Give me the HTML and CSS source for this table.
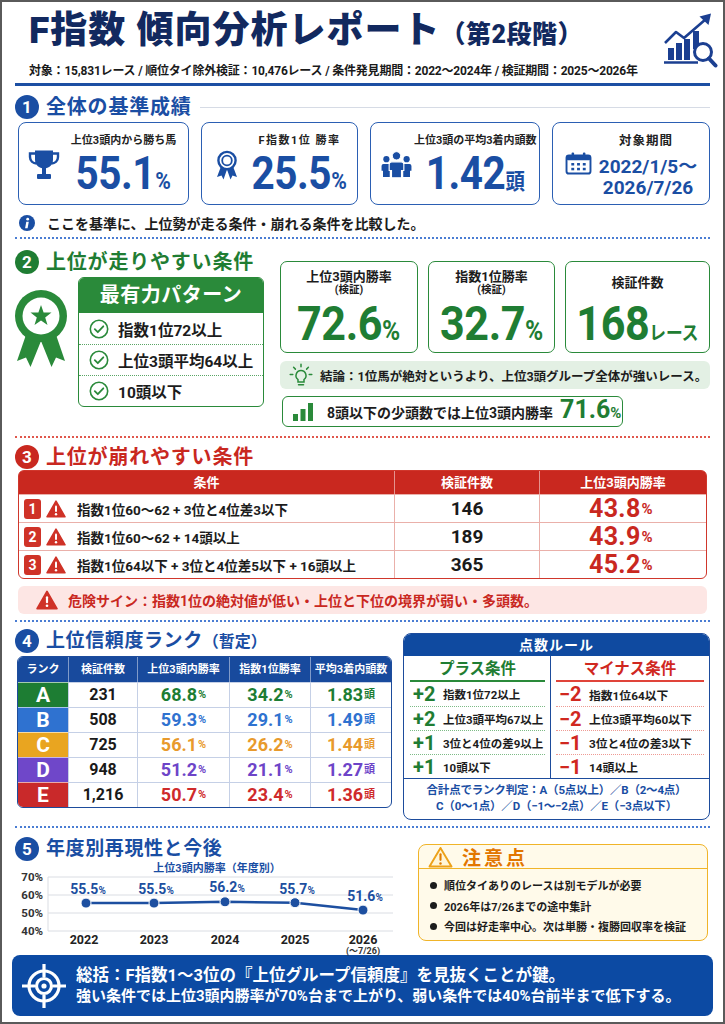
FILE: index.html
```html
<!DOCTYPE html>
<html lang="ja">
<head>
<meta charset="utf-8">
<title>F指数 傾向分析レポート</title>
<link rel="stylesheet" href="styles.css">
</head>
<body>
<div class="page">

<header class="hdr">
  <div class="hdr-text">
    <h1 class="title">F指数 傾向分析レポート<span class="title-sub">（第2段階）</span></h1>
    <p class="meta">対象：15,831レース / 順位タイ除外検証：10,476レース / 条件発見期間：2022～2024年 / 検証期間：2025～2026年</p>
  </div>
  <svg class="logo" viewBox="0 0 56 57" aria-hidden="true">
    <g fill="#1b3f91">
      <rect x="6" y="36" width="6" height="12"/>
      <rect x="14" y="31" width="6" height="17"/>
      <rect x="22" y="27" width="6" height="21"/>
      <rect x="31" y="19" width="6" height="18"/>
    </g>
    <line x1="2" y1="50.5" x2="36" y2="50.5" stroke="#1b3f91" stroke-width="2.5"/>
    <polyline points="3,31 14,20 22,26 44,7" fill="none" stroke="#1b3f91" stroke-width="2.6" stroke-linejoin="round"/>
    <polygon points="37.5,4.5 49,1.5 46.5,13" fill="#1b3f91"/>
    <circle cx="41" cy="40" r="8.5" fill="#fff" stroke="#1b3f91" stroke-width="3"/>
    <line x1="47" y1="46.5" x2="53.5" y2="53.5" stroke="#1b3f91" stroke-width="4" stroke-linecap="round"/>
  </svg>
</header>

<section class="s1">
  <div class="sec-head c-blue"><span class="num">1</span><h2>全体の基準成績</h2><span class="head-line"></span></div>
  <div class="kpis">
    <div class="kpi">
      <div class="kpi-label">上位3頭内から勝ち馬</div>
      <svg class="kpi-ico ico-trophy" viewBox="0 0 34 32" fill="#1a4ea3">
        <path d="M8 1.5h18v9c0 5.5-4 9-9 9s-9-3.5-9-9z"/>
        <path d="M8.5 4.5H3v3.5c0 4 3 6.5 6.5 6.5M25.5 4.5H31v3.5c0 4-3 6.5-6.5 6.5" fill="none" stroke="#1a4ea3" stroke-width="2.4"/>
        <rect x="15" y="19" width="4" height="6"/>
        <rect x="10" y="25" width="14" height="5" rx="1"/>
      </svg>
      <div class="kpi-val"><span class="big">55.1<small>%</small></span></div>
    </div>
    <div class="kpi">
      <div class="kpi-label spaced">F指数1位 勝率</div>
      <svg class="kpi-ico ico-rosette" viewBox="0 0 24 30" fill="#1a4ea3">
        <path d="M6.5 15 L2 27 L6.5 25.5 L8.5 29.5 L12 19.5 Z"/>
        <path d="M17.5 15 L22 27 L17.5 25.5 L15.5 29.5 L12 19.5 Z"/>
        <circle cx="12" cy="10.5" r="8.6" fill="#fff" stroke="#1a4ea3" stroke-width="2.4"/>
        <circle cx="12" cy="10.5" r="4.8" fill="none" stroke="#1a4ea3" stroke-width="1.8"/>
      </svg>
      <div class="kpi-val"><span class="big">25.5<small>%</small></span></div>
    </div>
    <div class="kpi">
      <div class="kpi-label">上位3頭の平均3着内頭数</div>
      <svg class="kpi-ico ico-people" viewBox="0 0 32 28" fill="#1a4ea3">
        <circle cx="5.5" cy="8.5" r="3.2"/>
        <path d="M2.5 13.5h6a2 2 0 0 1 2 2v5h-1.5v6.5h-7v-6.5H0.5v-5a2 2 0 0 1 2-2z"/>
        <circle cx="26.5" cy="8.5" r="3.2"/>
        <path d="M23.5 13.5h6a2 2 0 0 1 2 2v5h-1.5v6.5h-7v-6.5h-1.5v-5a2 2 0 0 1 2-2z"/>
        <circle cx="16" cy="5" r="4.3" stroke="#fff" stroke-width="1"/>
        <path d="M11 11.2h10a2.6 2.6 0 0 1 2.6 2.6v6.4h-2.4v7.6h-10.4v-7.6H8.4v-6.4a2.6 2.6 0 0 1 2.6-2.6z" stroke="#fff" stroke-width="1.2"/>
      </svg>
      <div class="kpi-val"><span class="big">1.42<small class="jp">頭</small></span></div>
    </div>
    <div class="kpi">
      <div class="kpi-label k4">対象期間</div>
      <svg class="kpi-ico ico-cal" viewBox="0 0 28 24">
        <rect x="1.5" y="3.5" width="25" height="19" rx="2.5" fill="none" stroke="#1a4ea3" stroke-width="2"/>
        <rect x="1.5" y="3.5" width="25" height="5" rx="1.5" fill="#1a4ea3"/>
        <rect x="6.8" y="0.5" width="2.6" height="6" rx="1" fill="#1a4ea3"/>
        <rect x="18.6" y="0.5" width="2.6" height="6" rx="1" fill="#1a4ea3"/>
        <g fill="#1a4ea3">
          <rect x="6.5" y="11.5" width="3" height="2.6"/>
          <rect x="12.5" y="11.5" width="3" height="2.6"/>
          <rect x="18.5" y="11.5" width="3" height="2.6"/>
          <rect x="6.5" y="16.5" width="3" height="2.6"/>
          <rect x="12.5" y="16.5" width="3" height="2.6"/>
          <rect x="18.5" y="16.5" width="3" height="2.6"/>
        </g>
      </svg>
      <div class="kpi-date">2022/1/5～<br>2026/7/26</div>
    </div>
  </div>
  <p class="info">
    <svg viewBox="0 0 16 16"><circle cx="8" cy="8" r="8" fill="#1a4ea3"/><circle cx="8.7" cy="4.2" r="1.4" fill="#fff"/><path d="M7.3 6.7h2.5l-1.2 6.6H6.1z" fill="#fff"/></svg>
    ここを基準に、上位勢が走る条件・崩れる条件を比較した。
  </p>
</section>

<div class="sep sep-blue"></div>

<section class="s2">
  <div class="s2-left">
    <div class="sec-head c-green"><span class="num">2</span><h2>上位が走りやすい条件</h2></div>
    <div class="pattern-wrap">
      <svg class="award" viewBox="0 0 54 82">
        <path d="M14 40 L3 72 L12 68.5 L16.5 78 L27 52 Z" fill="#2a8a3a"/>
        <path d="M40 40 L51 72 L42 68.5 L37.5 78 L27 52 Z" fill="#2a8a3a"/>
        <circle cx="27" cy="27" r="26" fill="#2a8a3a"/>
        <circle cx="27" cy="27" r="18.5" fill="#fff"/>
        <polygon points="27,16 29.6,23.4 37.5,23.6 31.2,28.4 33.5,36 27,31.5 20.5,36 22.8,28.4 16.5,23.6 24.4,23.4" fill="#2a8a3a"/>
      </svg>
      <div class="pattern">
        <div class="pattern-head">最有力パターン</div>
        <ul class="pattern-list">
          <li><svg class="chk" viewBox="0 0 20 20"><circle cx="10" cy="10" r="8.7" fill="none" stroke="#2a8a3a" stroke-width="1.6"/><polyline points="5.8,10.2 8.8,13.2 14.3,7.3" fill="none" stroke="#2a8a3a" stroke-width="1.8" stroke-linecap="round" stroke-linejoin="round"/></svg>指数1位72以上</li>
          <li><svg class="chk" viewBox="0 0 20 20"><circle cx="10" cy="10" r="8.7" fill="none" stroke="#2a8a3a" stroke-width="1.6"/><polyline points="5.8,10.2 8.8,13.2 14.3,7.3" fill="none" stroke="#2a8a3a" stroke-width="1.8" stroke-linecap="round" stroke-linejoin="round"/></svg>上位3頭平均64以上</li>
          <li><svg class="chk" viewBox="0 0 20 20"><circle cx="10" cy="10" r="8.7" fill="none" stroke="#2a8a3a" stroke-width="1.6"/><polyline points="5.8,10.2 8.8,13.2 14.3,7.3" fill="none" stroke="#2a8a3a" stroke-width="1.8" stroke-linecap="round" stroke-linejoin="round"/></svg>10頭以下</li>
        </ul>
      </div>
    </div>
  </div>
  <div class="s2-right">
    <div class="stats">
      <div class="stat">
        <div class="stat-top"><div class="stat-label">上位3頭内勝率</div><div class="stat-sub">(検証)</div></div>
        <div class="stat-val"><span class="big">72.6<small>%</small></span></div>
      </div>
      <div class="stat">
        <div class="stat-top"><div class="stat-label">指数1位勝率</div><div class="stat-sub">(検証)</div></div>
        <div class="stat-val"><span class="big">32.7<small>%</small></span></div>
      </div>
      <div class="stat">
        <div class="stat-top"><div class="stat-label">検証件数</div></div>
        <div class="stat-val"><span class="big">168<small class="unit">レース</small></span></div>
      </div>
    </div>
    <div class="conclusion">
      <svg viewBox="0 0 24 24" fill="none" stroke="#2a8a3a" stroke-width="1.5" stroke-linecap="round"><path d="M12 7.5a5 5 0 0 0-3 9v2.5h6v-2.5a5 5 0 0 0-3-9z"/><path d="M9.5 21.7h5"/><path d="M12 1.2v2.6M4.6 4.3l1.8 1.8M19.4 4.3l-1.8 1.8M1.2 11.5h2.6M20.2 11.5h2.6"/></svg>
      結論：1位馬が絶対というより、上位3頭グループ全体が強いレース。
    </div>
    <div class="mini">
      <svg viewBox="0 0 20 18" fill="#2a8a3a"><rect x="0" y="11" width="5" height="7"/><rect x="7.5" y="6" width="5" height="12"/><rect x="15" y="0" width="5" height="18"/></svg>
      <span class="mini-text">8頭以下の少頭数では上位3頭内勝率</span><span class="mini-val">71.6<small>%</small></span>
    </div>
  </div>
</section>

<div class="sep sep-red"></div>

<section class="s3">
  <div class="sec-head c-red"><span class="num">3</span><h2>上位が崩れやすい条件</h2></div>
  <div class="risk">
    <div class="risk-row risk-head"><div>条件</div><div>検証件数</div><div>上位3頭内勝率</div></div>
    <div class="risk-row risk-body">
      <div class="risk-cond"><span class="badge">1</span><svg class="warn" viewBox="0 0 20 18"><path d="M10 1.2 L19 16.8 H1 Z" fill="#cf3227" stroke="#cf3227" stroke-width="1.6" stroke-linejoin="round"/><rect x="9" y="5.6" width="2" height="6.4" rx="1" fill="#fff"/><circle cx="10" cy="14.2" r="1.2" fill="#fff"/></svg>指数1位60～62 + 3位と4位差3以下</div>
      <div class="risk-n">146</div>
      <div class="risk-v">43.8<small>%</small></div>
    </div>
    <div class="risk-row risk-body">
      <div class="risk-cond"><span class="badge">2</span><svg class="warn" viewBox="0 0 20 18"><path d="M10 1.2 L19 16.8 H1 Z" fill="#cf3227" stroke="#cf3227" stroke-width="1.6" stroke-linejoin="round"/><rect x="9" y="5.6" width="2" height="6.4" rx="1" fill="#fff"/><circle cx="10" cy="14.2" r="1.2" fill="#fff"/></svg>指数1位60～62 + 14頭以上</div>
      <div class="risk-n">189</div>
      <div class="risk-v">43.9<small>%</small></div>
    </div>
    <div class="risk-row risk-body risk-last">
      <div class="risk-cond"><span class="badge">3</span><svg class="warn" viewBox="0 0 20 18"><path d="M10 1.2 L19 16.8 H1 Z" fill="#cf3227" stroke="#cf3227" stroke-width="1.6" stroke-linejoin="round"/><rect x="9" y="5.6" width="2" height="6.4" rx="1" fill="#fff"/><circle cx="10" cy="14.2" r="1.2" fill="#fff"/></svg>指数1位64以下 + 3位と4位差5以下 + 16頭以上</div>
      <div class="risk-n">365</div>
      <div class="risk-v">45.2<small>%</small></div>
    </div>
  </div>
  <div class="danger">
    <svg viewBox="0 0 20 18"><path d="M10 1.2 L19 16.8 H1 Z" fill="#cf3227" stroke="#cf3227" stroke-width="1.6" stroke-linejoin="round"/><rect x="9" y="5.6" width="2" height="6.4" rx="1" fill="#fff"/><circle cx="10" cy="14.2" r="1.2" fill="#fff"/></svg>
    危険サイン：指数1位の絶対値が低い・上位と下位の境界が弱い・多頭数。
  </div>
</section>

<div class="sep sep-blue sep-b2"></div>

<section class="s4">
  <div class="s4-left">
    <div class="sec-head c-blue small-h"><span class="num">4</span><h2>上位信頼度ランク<span class="h2-sub">（暫定）</span></h2></div>
    <div class="rank">
      <div class="rk-row rk-head"><div>ランク</div><div>検証件数</div><div>上位3頭内勝率</div><div>指数1位勝率</div><div>平均3着内頭数</div></div>
      <div class="rk-row rk-body ra"><div class="rk-letter">A</div><div class="rk-n">231</div><div class="rk-v">68.8<small>%</small></div><div class="rk-v">34.2<small>%</small></div><div class="rk-v">1.83<small>頭</small></div></div>
      <div class="rk-row rk-body rb"><div class="rk-letter">B</div><div class="rk-n">508</div><div class="rk-v">59.3<small>%</small></div><div class="rk-v">29.1<small>%</small></div><div class="rk-v">1.49<small>頭</small></div></div>
      <div class="rk-row rk-body rc"><div class="rk-letter">C</div><div class="rk-n">725</div><div class="rk-v">56.1<small>%</small></div><div class="rk-v">26.2<small>%</small></div><div class="rk-v">1.44<small>頭</small></div></div>
      <div class="rk-row rk-body rd"><div class="rk-letter">D</div><div class="rk-n">948</div><div class="rk-v">51.2<small>%</small></div><div class="rk-v">21.1<small>%</small></div><div class="rk-v">1.27<small>頭</small></div></div>
      <div class="rk-row rk-body re"><div class="rk-letter">E</div><div class="rk-n">1,216</div><div class="rk-v">50.7<small>%</small></div><div class="rk-v">23.4<small>%</small></div><div class="rk-v">1.36<small>頭</small></div></div>
    </div>
  </div>
  <div class="pts">
    <div class="pts-head">点数ルール</div>
    <div class="pts-cols">
      <div class="pts-col plus">
        <div class="pts-sub">プラス条件</div>
        <div class="pts-row"><span class="sign">+2</span>指数1位72以上</div>
        <div class="pts-row"><span class="sign">+2</span>上位3頭平均67以上</div>
        <div class="pts-row"><span class="sign">+1</span>3位と4位の差9以上</div>
        <div class="pts-row"><span class="sign">+1</span>10頭以下</div>
      </div>
      <div class="pts-col minus">
        <div class="pts-sub">マイナス条件</div>
        <div class="pts-row"><span class="sign">−2</span>指数1位64以下</div>
        <div class="pts-row"><span class="sign">−2</span>上位3頭平均60以下</div>
        <div class="pts-row"><span class="sign">−1</span>3位と4位の差3以下</div>
        <div class="pts-row"><span class="sign">−1</span>14頭以上</div>
      </div>
    </div>
    <div class="pts-foot">合計点でランク判定：A（5点以上）／B（2～4点）<br>C（0～1点）／D（−1～−2点）／E（−3点以下）</div>
  </div>
</section>

<div class="sep sep-blue sep-b3"></div>

<section class="s5">
  <div class="s5-left">
    <div class="sec-head c-blue small-h"><span class="num">5</span><h2>年度別再現性と今後</h2></div>
    <svg class="chart" viewBox="0 0 385 93">
      <text class="ch-title" x="202" y="10" text-anchor="middle">上位3頭内勝率（年度別）</text>
      <g stroke="#dadde3" stroke-width="1">
        <line x1="33" y1="15" x2="378" y2="15"/>
        <line x1="33" y1="33" x2="378" y2="33"/>
        <line x1="33" y1="51" x2="378" y2="51"/>
        <line x1="33" y1="69" x2="378" y2="69"/>
        <line x1="33" y1="15" x2="33" y2="69"/>
      </g>
      <g class="ch-y" text-anchor="end">
        <text x="28" y="19">70%</text>
        <text x="28" y="37">60%</text>
        <text x="28" y="55">50%</text>
        <text x="28" y="73">40%</text>
      </g>
      <polyline points="71,41.1 139,41.1 210,39.8 280,40.7 348,48.1" fill="none" stroke="#1d4fa0" stroke-width="2.5" stroke-linejoin="round"/>
      <g fill="#1d4fa0" stroke="#fff" stroke-width="1">
        <circle cx="71" cy="41.1" r="5"/>
        <circle cx="139" cy="41.1" r="5"/>
        <circle cx="210" cy="39.8" r="5"/>
        <circle cx="280" cy="40.7" r="5"/>
        <circle cx="348" cy="48.1" r="5"/>
      </g>
      <g class="ch-v" text-anchor="middle">
        <text x="73" y="32">55.5<tspan class="ch-p">%</tspan></text>
        <text x="141" y="32">55.5<tspan class="ch-p">%</tspan></text>
        <text x="212" y="30">56.2<tspan class="ch-p">%</tspan></text>
        <text x="282" y="32">55.7<tspan class="ch-p">%</tspan></text>
        <text x="350" y="39">51.6<tspan class="ch-p">%</tspan></text>
      </g>
      <g class="ch-x" text-anchor="middle">
        <text x="69" y="82">2022</text>
        <text x="139" y="82">2023</text>
        <text x="210" y="82">2024</text>
        <text x="280" y="82">2025</text>
        <text x="348" y="82">2026</text>
      </g>
      <text class="ch-xs" x="348" y="92" text-anchor="middle">(～7/26)</text>
    </svg>
  </div>
  <div class="caution">
    <div class="caution-head">
      <svg viewBox="0 0 26 23"><path d="M13 2 L24.5 21.5 H1.5 Z" fill="#fff6d8" stroke="#eda21a" stroke-width="2" stroke-linejoin="round"/><rect x="11.9" y="7.6" width="2.2" height="8" rx="1.1" fill="#e07b00"/><circle cx="13" cy="18.4" r="1.3" fill="#e07b00"/></svg>
      注意点
    </div>
    <ul>
      <li>順位タイありのレースは別モデルが必要</li>
      <li>2026年は7/26までの途中集計</li>
      <li>今回は好走率中心。次は単勝・複勝回収率を検証</li>
    </ul>
  </div>
</section>

<div class="summary">
  <svg viewBox="0 0 44 48" fill="none" stroke="#fff" stroke-width="3.2"><circle cx="22" cy="24" r="15"/><circle cx="22" cy="24" r="7.5"/><circle cx="22" cy="24" r="2.6" fill="#fff" stroke="none"/><path d="M22 2v13M22 33v13M0 24h13M31 24h13"/></svg>
  <div class="sum-text">
    <p class="sum-1">総括：F指数1～3位の『上位グループ信頼度』を見抜くことが鍵。</p>
    <p class="sum-2">強い条件では上位3頭内勝率が70%台まで上がり、弱い条件では40%台前半まで低下する。</p>
  </div>
</div>

</div>
</body>
</html>
```

FILE: styles.css
```css
* { box-sizing: border-box; margin: 0; padding: 0; }
html, body { background: #fff; }
body {
  font-family: Roboto, "Noto Sans CJK JP", sans-serif;
  font-weight: 700;
  color: #1c1c1c;
}
ul { list-style: none; }
svg { display: block; flex: none; }

.page {
  width: 725px;
  height: 1024px;
  border: 2px solid #5a5a5a;
  padding: 0 13px;
  overflow: hidden;
  background: #fff;
}

/* header */
.hdr {
  display: flex;
  justify-content: space-between;
  align-items: flex-start;
  padding: 8px 0 4px;
  border-bottom: 3px solid #1c4fa3;
}
.hdr-text { padding-left: 14px; }
.title {
  font-size: 37px;
  line-height: 42px;
  font-weight: 900;
  color: #12295f;
  letter-spacing: 1px;
  white-space: nowrap;
}
.title-sub { font-size: 25px; font-weight: 900; letter-spacing: 0.5px; }
.meta {
  margin-top: 7px;
  font-size: 12px;
  line-height: 16px;
  letter-spacing: -0.2px;
  color: #1a1a1a;
  white-space: nowrap;
}
.logo { width: 56px; height: 57px; margin: 2px -8px 0 0; }

/* section headings */
.sec-head { display: flex; align-items: center; height: 26px; }
.num {
  flex: none;
  width: 24px;
  height: 24px;
  border-radius: 50%;
  color: #fff;
  font-size: 17px;
  line-height: 24px;
  text-align: center;
}
.sec-head h2 {
  margin-left: 7px;
  font-size: 20px;
  line-height: 26px;
  letter-spacing: 0.8px;
  white-space: nowrap;
}
.small-h h2 { font-size: 19px; letter-spacing: 0.6px; }
.h2-sub { font-size: 16px; letter-spacing: 0; }
.c-blue .num { background: #1a4ea3; }
.c-blue h2 { color: #1a4ea3; }
.c-green .num { background: #1f7d33; }
.c-green h2 { color: #1f7d33; }
.c-red .num { background: #c9281f; }
.c-red h2 { color: #c9281f; }
.head-line { flex: 1; height: 1px; background: #d6dbe5; margin-left: 8px; }

.sep { border-top: 2px dotted #4a7dd3; }
.sep-blue { margin-top: 5px; }
.sep-red { margin-top: 9px; border-top-color: #e0574c; }
.sep-b2 { margin-top: 6px; }
.sep-b3 { margin-top: 6px; }

.big {
  display: inline-block;
  transform: scaleX(0.88);
  transform-origin: center;
  white-space: nowrap;
  letter-spacing: -0.5px;
}
.big small { letter-spacing: 0; }

/* section 1 */
.s1 { padding-top: 8px; }
.kpis {
  display: grid;
  grid-template-columns: 171px 157px 170px 158px;
  column-gap: 12px;
  margin: 2px 0 0 3px;
}
.kpi {
  height: 83px;
  border: 1.5px solid #2b5fb3;
  border-radius: 8px;
  display: grid;
  grid-template-columns: 36px 1fr;
  grid-template-rows: 18px 1fr;
  padding: 9px 3px 0 7px;
}
.kpi-label {
  grid-column: 2;
  grid-row: 1;
  font-size: 11px;
  line-height: 18px;
  text-align: center;
  white-space: nowrap;
  color: #222;
}
.kpi-label.spaced { letter-spacing: 1.5px; }
.kpi-label.k4 { font-size: 12.5px; letter-spacing: 1px; padding-right: 10px; }
.kpi-ico { grid-column: 1; grid-row: 2; justify-self: center; margin-top: -1px; }
.ico-trophy { width: 34px; height: 32px; }
.ico-rosette { width: 24px; height: 30px; margin-top: 0; }
.ico-people { width: 31px; height: 27px; margin-top: 1px; }
.ico-cal { width: 27px; height: 23px; margin-top: 2px; }
.kpi-val { grid-column: 2; grid-row: 2; display: flex; justify-content: center; height: 46px; }
.kpi .big { font-size: 46px; line-height: 46px; color: #1a4ea3; }
.kpi .big small { font-size: 24px; }
.kpi .big small.jp { font-size: 22px; }
.kpi-date {
  grid-column: 2;
  grid-row: 2;
  font-size: 19px;
  line-height: 21px;
  color: #1a4ea3;
  text-align: center;
  padding: 6px 6px 0 0;
  white-space: nowrap;
}
.info {
  display: flex;
  align-items: center;
  height: 18px;
  margin-top: 9px;
  padding-left: 4px;
  font-size: 14px;
  color: #1c1c1c;
}
.info svg { width: 16px; height: 16px; margin-right: 12px; }

/* section 2 */
.s2 { display: grid; grid-template-columns: 265px 1fr; }
.s2-left { padding-top: 10px; }
.pattern-wrap { display: flex; margin-top: 2px; }
.award { width: 54px; height: 82px; margin: 12px 10px 0 -1px; }
.pattern {
  width: 186px;
  border: 1.5px solid #2a8a3a;
  border-radius: 6px;
  overflow: hidden;
}
.pattern-head {
  height: 35px;
  background: #2a8a3a;
  color: #fff;
  font-size: 20px;
  line-height: 35px;
  text-align: center;
  letter-spacing: 0.5px;
}
.pattern-list li {
  display: flex;
  align-items: center;
  height: 31px;
  padding-left: 10px;
  font-size: 15.5px;
  color: #1c1c1c;
  white-space: nowrap;
}
.pattern-list li + li { border-top: 1.5px dotted #5aa565; }
.chk { width: 20px; height: 20px; margin-right: 9px; }

.s2-right { padding-top: 22px; }
.stats { display: grid; grid-template-columns: 138px 127px 1fr; column-gap: 10px; }
.stat {
  height: 92px;
  border: 1.5px solid #2a8a3a;
  border-radius: 7px;
  padding-top: 5px;
  display: flex;
  flex-direction: column;
}
.stat-top {
  height: 30px;
  display: flex;
  flex-direction: column;
  justify-content: center;
  align-items: center;
  color: #1c1c1c;
}
.stat-label { font-size: 13px; line-height: 15px; }
.stat-sub { font-size: 10.5px; line-height: 12px; }
.stat-val { display: flex; justify-content: center; height: 50px; margin-top: 2px; }
.stat .big { font-size: 49px; line-height: 50px; color: #1f7d33; }
.stat .big small { font-size: 28px; }
.stat .big small.unit { font-size: 19px; }

.conclusion {
  display: flex;
  align-items: center;
  height: 28px;
  margin-top: 8px;
  background: #e3f0e4;
  border-radius: 6px;
  padding-left: 9px;
  font-size: 12.5px;
  color: #1c1c1c;
  white-space: nowrap;
}
.conclusion svg { width: 24px; height: 24px; margin-right: 7px; }
.mini {
  display: flex;
  align-items: center;
  width: 341px;
  height: 31px;
  margin: 7px 0 0 2px;
  border: 1.5px solid #2a8a3a;
  border-radius: 6px;
  padding-left: 10px;
  white-space: nowrap;
}
.mini svg { width: 20px; height: 18px; margin-right: 14px; }
.mini-text { font-size: 14px; color: #1c1c1c; }
.mini-val { font-size: 25px; color: #1f7d33; margin-left: 7px; line-height: 28px; }
.mini-val small { font-size: 15px; }

/* section 3 */
.s3 { padding-top: 6px; }
.risk {
  margin: 0 3px;
  border: 1.5px solid #d0372c;
  border-radius: 6px;
}
.risk-row { display: grid; grid-template-columns: 375px 145px 1fr; }
.risk-head {
  height: 23px;
  background: #c9281f;
  color: #fff;
  font-size: 13px;
  line-height: 23px;
  text-align: center;
  border-radius: 4px 4px 0 0;
}
.risk-head div + div { border-left: 1px solid rgba(255, 255, 255, 0.5); }
.risk-body { height: 28px; border-top: 1px solid #eab0aa; }
.risk-body > div + div { border-left: 1px solid #eab0aa; }
.risk-cond {
  display: flex;
  align-items: center;
  padding-left: 5px;
  font-size: 13.5px;
  white-space: nowrap;
  color: #1c1c1c;
}
.badge {
  flex: none;
  width: 17px;
  height: 20px;
  border-radius: 3px;
  background: #cf3227;
  color: #fff;
  font-size: 14px;
  line-height: 20px;
  text-align: center;
  margin-right: 5px;
}
.warn { width: 20px; height: 18px; margin-right: 11px; }
.risk-n {
  display: flex;
  align-items: center;
  justify-content: center;
  font-size: 19px;
  color: #1a1a1a;
}
.risk-v {
  display: flex;
  align-items: center;
  justify-content: center;
  font-size: 25px;
  line-height: 24px;
  color: #c9281f;
  padding-right: 4px;
  letter-spacing: 0.3px;
}
.risk-v small { font-size: 15px; margin-left: 1px; }
.danger {
  display: flex;
  align-items: center;
  height: 28px;
  margin: 7px 3px 0;
  background: #fde6e4;
  border-radius: 6px;
  padding-left: 18px;
  color: #c9281f;
  font-size: 14px;
}
.danger svg { width: 22px; height: 20px; margin-right: 10px; }

/* section 4 */
.s4 { display: grid; grid-template-columns: 377px 1fr; column-gap: 11px; }
.s4-left { padding-top: 6px; }
.rank {
  margin: 2px 0 0 2px;
  border: 1.5px solid #1d4c9c;
  border-radius: 6px;
  overflow: hidden;
}
.rk-row { display: grid; grid-template-columns: 50px 69px 92px 81px 1fr; }
.rk-head {
  height: 25px;
  background: #184a9d;
  color: #fff;
  font-size: 11px;
  line-height: 25px;
  text-align: center;
  white-space: nowrap;
}
.rk-head div + div { border-left: 1px solid rgba(255, 255, 255, 0.45); }
.rk-body { height: 25px; }
.rk-body > div {
  display: flex;
  align-items: center;
  justify-content: center;
  border-top: 1px solid #c5d0e6;
  line-height: 24px;
}
.rk-body > div + div { border-left: 1px solid #c5d0e6; }
.rk-letter { color: #fff; font-size: 21px; border-top-color: rgba(255, 255, 255, 0.6) !important; }
.rk-n { font-size: 16px; color: #1a1a1a; }
.rk-v { font-size: 18px; }
.rk-v small { font-size: 11px; margin-left: 1px; }
.ra .rk-letter { background: #1d7d33; } .ra .rk-v { color: #1d7d33; }
.rb .rk-letter { background: #2f72d0; } .rb .rk-v { color: #2f72d0; }
.rc .rk-letter { background: #e9a520; } .rc .rk-v { color: #e89a2c; }
.rd .rk-letter { background: #6f47c9; } .rd .rk-v { color: #6d44c8; }
.re .rk-letter { background: #c9292a; } .re .rk-v { color: #cf2a2b; }

.pts {
  margin-top: 11px;
  height: 187px;
  border: 1.5px solid #1d4c9c;
  border-radius: 8px;
  overflow: hidden;
  display: flex;
  flex-direction: column;
}
.pts-head {
  height: 22px;
  background: #0f4aa0;
  color: #fff;
  font-size: 14px;
  line-height: 22px;
  text-align: center;
  letter-spacing: 1px;
}
.pts-cols { display: grid; grid-template-columns: 147px 1fr; }
.pts-col { padding: 2px 5px 0 6px; }
.pts-col.plus { border-right: 1.5px solid #1d4c9c; }
.pts-col.minus { padding: 2px 5px 0 5px; }
.pts-sub {
  height: 24px;
  font-size: 15.5px;
  line-height: 22px;
  text-align: center;
  border-bottom: 2px solid;
}
.plus .pts-sub { color: #1f7d33; border-color: #2a8a3a; }
.minus .pts-sub { color: #d0281f; border-color: #e0443a; }
.pts-row {
  display: flex;
  align-items: center;
  height: 24px;
  font-size: 11.8px;
  white-space: nowrap;
  color: #1c1c1c;
}
.plus .pts-row { font-size: 11.5px; }
.pts-row + .pts-row { border-top: 1px dotted; }
.plus .pts-row + .pts-row { border-top-color: #7dbb86; }
.minus .pts-row + .pts-row { border-top-color: #ee9a93; }
.sign { width: 33px; padding-left: 3px; font-size: 20px; flex: none; }
.plus .sign { color: #1f7d33; }
.minus .sign { color: #d0281f; }
.pts-foot {
  flex: 1;
  border-top: 1.5px solid #1d4c9c;
  font-size: 11.5px;
  line-height: 16px;
  color: #1a4ea3;
  text-align: center;
  padding-top: 3px;
  white-space: nowrap;
  letter-spacing: -0.2px;
}

/* section 5 */
.s5 { display: grid; grid-template-columns: 385px 1fr; column-gap: 18px; }
.s5-left { padding-top: 8px; }
.chart { width: 385px; height: 93px; overflow: visible; }
.ch-title { font-size: 11px; fill: #1a4ea3; font-weight: 700; }
.ch-y text { font-size: 11.5px; fill: #333; font-weight: 700; }
.ch-v text { font-size: 14px; fill: #1d4fa0; font-weight: 700; }
.ch-p { font-size: 10px; }
.ch-x text { font-size: 12.5px; fill: #222; font-weight: 700; }
.ch-xs { font-size: 9px; fill: #333; font-weight: 700; }

.caution {
  margin: 16px 2px 0 0;
  height: 97px;
  border: 1.5px solid #f0b429;
  border-radius: 8px;
  background: #fffaea;
  overflow: hidden;
}
.caution-head {
  display: flex;
  align-items: center;
  height: 24px;
  padding-left: 9px;
  border-bottom: 1.5px solid #f0b429;
  color: #e27600;
  font-size: 19px;
  letter-spacing: 3px;
}
.caution-head svg { width: 25px; height: 22px; margin-right: 9px; }
.caution ul { padding: 6px 0 0 11px; }
.caution li {
  display: flex;
  align-items: center;
  height: 20.5px;
  font-size: 11px;
  white-space: nowrap;
  color: #1c1c1c;
}
.caution li::before {
  content: "";
  flex: none;
  width: 7px;
  height: 7px;
  border-radius: 50%;
  background: #1c1c1c;
  margin-right: 7px;
}

/* summary */
.summary {
  display: flex;
  align-items: center;
  height: 61px;
  margin: 0 -3px;
  background: #0c4aa3;
  border-radius: 8px;
  color: #fff;
  padding-left: 10px;
}
.summary svg { width: 44px; height: 48px; margin-right: 10px; }
.sum-1 { font-size: 16.5px; line-height: 20px; white-space: nowrap; }
.sum-2 { font-size: 15px; line-height: 20px; white-space: nowrap; }
```
